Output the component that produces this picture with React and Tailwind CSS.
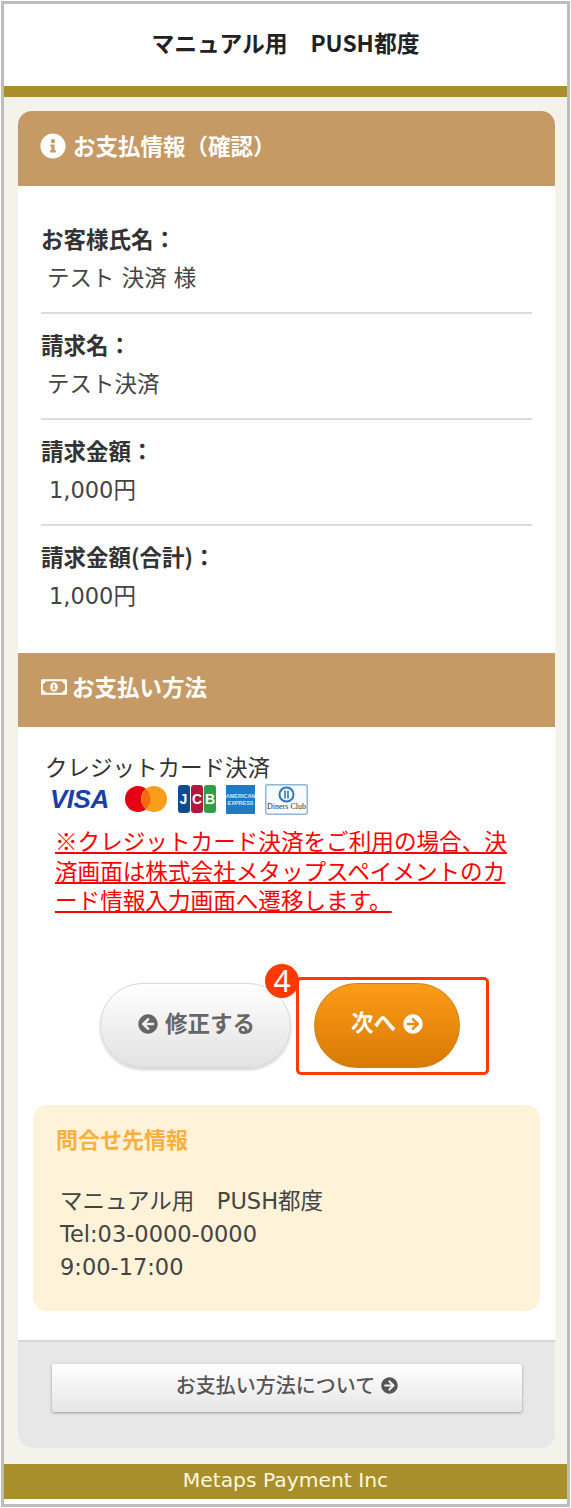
import React from "react";
import {
  FaArrowCircleLeft,
  FaArrowCircleRight,
  FaInfoCircle,
  FaRegMoneyBillAlt,
} from "react-icons/fa";

const jp = "font-['Noto_Sans_CJK_JP','Noto_Sans',sans-serif]";
const body = "font-['DejaVu_Sans','Noto_Sans_CJK_JP',sans-serif]";

const rows = [
  { label: "お客様氏名：", value: "テスト 決済 様", indent: "pl-[6px]" },
  { label: "請求名：", value: "テスト決済", indent: "pl-[6px]" },
  { label: "請求金額：", value: "1,000円", indent: "pl-[8px]" },
  { label: "請求金額(合計)：", value: "1,000円", indent: "pl-[8px]" },
];

const SectionHead = ({ icon, title, className }) => (
  <div className={`flex items-center bg-[#c59a65] pl-[23px] text-[22.5px] font-bold text-white ${className}`}>
    {icon}
    <span>{title}</span>
  </div>
);

// card logos
const CardLogos = () => (
  <div className="ml-[5px] flex h-[32px] items-center">
    <span className="w-[60px] font-['Liberation_Sans',sans-serif] text-[26px] leading-none font-bold tracking-[-0.5px] text-[#1a3fa8] italic">
      VISA
    </span>
    <svg width="42" height="26" viewBox="0 0 42 26" className="ml-[15px]">
      <circle cx="13" cy="13" r="13" fill="#e60012" />
      <circle cx="29" cy="13" r="13" fill="#f79e1b" />
      <path d="M21 3.2a13 13 0 0 1 0 19.6a13 13 0 0 1 0-19.6z" fill="#f26a0f" />
    </svg>
    <svg width="38" height="28" viewBox="0 0 38 28" className="ml-[11px]">
      <rect x="0" y="0" width="12" height="28" rx="3" fill="#0f4c8f" />
      <rect x="13" y="0" width="12" height="28" rx="3" fill="#b3173b" />
      <rect x="26" y="0" width="12" height="28" rx="3" fill="#2f9e44" />
      <text x="1.5" y="19" fontSize="14" fontWeight="700" fill="#fff" fontFamily="Liberation Sans">J</text>
      <text x="14" y="19" fontSize="14" fontWeight="700" fill="#fff" fontFamily="Liberation Sans">C</text>
      <text x="27" y="19" fontSize="14" fontWeight="700" fill="#fff" fontFamily="Liberation Sans">B</text>
    </svg>
    <svg width="29" height="29" viewBox="0 0 29 29" className="ml-[10px]">
      <rect width="29" height="29" fill="#1f7cc4" />
      <text x="14.5" y="12.5" textAnchor="middle" fontSize="5.5" fontWeight="700" fill="#cfe6f7" fontFamily="Liberation Sans">AMERICAN</text>
      <text x="14.5" y="20" textAnchor="middle" fontSize="5.5" fontWeight="700" fill="#cfe6f7" fontFamily="Liberation Sans">EXPRESS</text>
    </svg>
    <svg width="43" height="31" viewBox="0 0 43 31" className="ml-[10px]">
      <rect x="0.75" y="0.75" width="41.5" height="29.5" rx="2" fill="#f7fbfe" stroke="#8fb8d6" strokeWidth="1.5" />
      <circle cx="21.5" cy="10.5" r="7" fill="none" stroke="#2a7ab8" strokeWidth="2" />
      <rect x="19.2" y="6.5" width="1.6" height="8" fill="#2a7ab8" />
      <rect x="22.2" y="6.5" width="1.6" height="8" fill="#2a7ab8" />
      <text x="21.5" y="25" textAnchor="middle" fontSize="8" fill="#333" fontFamily="Liberation Serif">Diners Club</text>
    </svg>
  </div>
);

export default function App() {
  return (
    <div className={`${jp} h-[1508px] w-[571px] bg-white p-px text-[#333]`}>
      <div className="flex h-[1506px] flex-col border-[3px] border-[#bdbdbd] bg-white">
        {/* header */}
        <div className="flex h-[82px] shrink-0 items-center justify-center pb-[3px] text-[22.8px] font-bold text-[#222]">
          マニュアル用　PUSH都度
        </div>
        <div className="h-[11px] shrink-0 bg-[#a88f2b]" />

        <div className="h-[1367px] shrink-0 bg-[#f3f3ec] pt-[14px] pr-[12px] pl-[14px]">
          <div className="overflow-hidden rounded-[14px] bg-white">
            <SectionHead
              className="h-[75px] gap-[7px] pb-[5px]"
              icon={<FaInfoCircle className="ml-[-1px] text-[26px]" />}
              title="お支払情報（確認）"
            />

            {/* details */}
            <div className="px-[23px] pt-[32px]">
              {rows.map((row, i) => (
                <div
                  key={row.label}
                  className={i < rows.length - 1 ? "mb-[10px] h-[96px] border-b-2 border-[#dcdcdc]" : "h-[96px]"}
                >
                  <div className="h-[41px] text-[22.5px] leading-[41px] font-bold text-[#333]">{row.label}</div>
                  <div className={`${body} h-[37px] text-[22.5px] leading-[39px] text-[#444] ${row.indent}`}>{row.value}</div>
                </div>
              ))}
            </div>

            <SectionHead
              className="mt-[21px] h-[74px] gap-[5px] pb-[6px]"
              icon={<FaRegMoneyBillAlt className="text-[26px]" />}
              title="お支払い方法"
            />

            {/* payment method */}
            <div className="pt-[22px] pl-[27px]">
              <div className="h-[34px] text-[22.5px] leading-[34px] text-[#333]">クレジットカード決済</div>
              <CardLogos />
              <p className="mt-[11px] ml-[10px] w-[470px] text-[22.6px] leading-[29.5px] text-[#ff0000] underline">
                ※クレジットカード決済をご利用の場合、決
                <br />
                済画面は株式会社メタップスペイメントのカ
                <br />
                ード情報入力画面へ遷移します。
              </p>
            </div>

            {/* buttons */}
            <div className="mt-[62px] flex pl-[82px]">
              <button className="mt-[6px] flex h-[85px] w-[191px] items-center justify-center gap-[7px] rounded-full border border-[#d8d8d8] bg-gradient-to-b from-white to-[#e2e2e2] pb-[5px] pl-[2px] text-[22.5px] font-bold text-[#666] shadow-[0_2px_3px_rgba(0,0,0,0.18)]">
                <FaArrowCircleLeft className="mt-[3px] text-[20px]" />
                修正する
              </button>
              <div className="relative ml-[5px] h-[98px] w-[193px] rounded-[5px] border-[3px] border-[#ff3a00] pt-[3px] pl-[15px]">
                <button className="flex h-[85px] w-[146px] items-center justify-center gap-[7px] rounded-full border border-[#c9801a] bg-gradient-to-b from-[#fd9c17] to-[#d87a03] pb-[6px] text-[22.5px] font-bold text-white">
                  次へ
                  <FaArrowCircleRight className="mt-[4px] text-[20px]" />
                </button>
                <span className="absolute top-[-16px] left-[-34px] flex h-[34px] w-[34px] items-center justify-center rounded-full bg-[#ff3a00] font-['Noto_Sans',sans-serif] text-[30px] leading-none text-white">
                  4
                </span>
              </div>
            </div>

            {/* contact */}
            <div className="mx-[15px] mt-[30px] h-[206px] rounded-[14px] bg-[#fef2d9] px-[23px] pt-[16px]">
              <div className="h-[34px] text-[22px] leading-[34px] font-bold text-[#fbb03b]">問合せ先情報</div>
              <div className={`${body} mt-[30px] pl-[4px] text-[22.5px] leading-[33px] text-[#444]`}>
                <div>マニュアル用　PUSH都度</div>
                <div>Tel:03-0000-0000</div>
                <div>9:00-17:00</div>
              </div>
            </div>

            {/* guide */}
            <div className="mt-[29px] h-[108px] border-t-2 border-[#d6d6d6] bg-[#e7e7e7] px-[34px] pt-[22px]">
              <button className="flex h-[48px] w-[470px] items-center justify-center gap-[6px] rounded-[3px] bg-gradient-to-b from-white to-[#e6e6e6] pb-[6px] text-[20px] font-medium text-[#555] shadow-[0_1px_3px_rgba(0,0,0,0.35)]">
                お支払い方法について
                <FaArrowCircleRight className="mt-[2px] text-[17px]" />
              </button>
            </div>
          </div>
        </div>

        {/* footer */}
        <div className="flex h-[35px] shrink-0 items-center justify-center bg-[#a88f2b] pb-[3px] font-['DejaVu_Sans',sans-serif] text-[20.3px] text-[#fff8dc]">
          Metaps Payment Inc
        </div>
      </div>
    </div>
  );
}
